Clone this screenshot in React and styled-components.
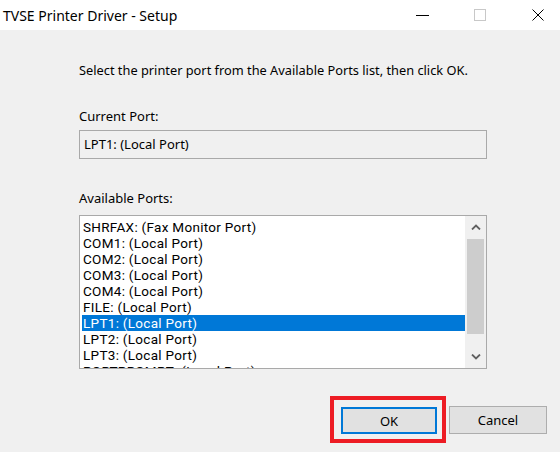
import React from 'react';
import styled, { createGlobalStyle } from 'styled-components';

const GlobalStyle = createGlobalStyle`
  html, body {
    margin: 0;
    padding: 0;
    background: #f0f0f0;
  }
  * { box-sizing: border-box; }
`

const Window = styled.div`
  width: 560px;
  height: 452px;
  background: #f0f0f0;
  font-family: 'Noto Sans', 'Open Sans', sans-serif;
  color: #000;
  overflow: hidden;
  display: flex;
  flex-direction: column;
`
const TitleBar = styled.div`
  height: 30px;
  background: #fff;
  display: flex;
  align-items: center;
  padding-left: 3px;
`
const Title = styled.div`
  flex: 1;
  font-size: 14px;
  margin-top: 1px;
`
const CaptionGroup = styled.div`
  display: flex;
  margin-right: -7px;
`
const CaptionButton = styled.div`
  width: 58px;
  height: 30px;
  display: flex;
  align-items: center;
  justify-content: center;
`
const Body = styled.div`
  flex: 1;
  display: flex;
  flex-direction: column;
  padding: 0 73px 0 79px;
`
const Intro = styled.p`
  margin: 31px 0 0 0;
  font-size: 12.8px;
  line-height: 18px;
`
const Label = styled.div`
  font-size: 13px;
  line-height: 18px;
  margin-top: ${p => p.$top}px;
`
const ReadOnlyField = styled.div`
  margin-top: 5px;
  height: 29px;
  border: 1px solid #a9a9a9;
  background: #f0f0f0;
  font-size: 13px;
  padding: 4px 0 0 4px;
`
const ListBox = styled.div`
  margin-top: 8px;
  height: 154px;
  border: 1px solid #a9a9a9;
  background: #fff;
  display: flex;
  overflow: hidden;
`
const Items = styled.div`
  flex: 1;
  padding: 3px 0 0 2px;
`
const Item = styled.div`
  height: 16px;
  line-height: 16px;
  font-family: Roboto, 'Noto Sans', sans-serif;
  font-size: 13.5px;
  letter-spacing: 0.3px;
  padding-left: 1px;
  white-space: nowrap;
  background: ${p => (p.$selected ? '#0078d7' : 'transparent')};
  color: ${p => (p.$selected ? '#fff' : '#000')};
`
const ScrollBar = styled.div`
  width: 21px;
  background: #f0f0f0;
  display: flex;
  flex-direction: column;
  align-items: center;
`
const ArrowBtn = styled.div`
  height: 22px;
  width: 100%;
  display: flex;
  align-items: center;
  justify-content: center;
`
const Track = styled.div`
  flex: 1;
  width: 100%;
  padding: 0 2px;
`
const Thumb = styled.div`
  margin-top: 1px;
  height: 95px;
  background: #cdcdcd;
`
const Footer = styled.div`
  display: flex;
  justify-content: flex-end;
  align-items: flex-end;
  gap: 3px;
  padding: 0 13px 9px 0;
  margin-top: auto;
`
const Highlight = styled.div`
  border: 4px solid #ed1c24;
  padding: 7px 5px 5px 7px;
`
const Button = styled.button`
  width: ${p => p.$w}px;
  height: ${p => (p.$focused ? 27 : 28)}px;
  margin-bottom: ${p => (p.$focused ? 0 : 9)}px;
  background: #e1e1e1;
  border: ${p => (p.$focused ? '2px solid #0078d7' : '1px solid #adadad')};
  font-family: 'Noto Sans', 'Open Sans', sans-serif;
  font-size: 13px;
  color: #000;
  padding: 0;
`

const ports = [
  'SHRFAX: (Fax Monitor Port)',
  'COM1: (Local Port)',
  'COM2: (Local Port)',
  'COM3: (Local Port)',
  'COM4: (Local Port)',
  'FILE: (Local Port)',
  'LPT1: (Local Port)',
  'LPT2: (Local Port)',
  'LPT3: (Local Port)',
  'PORTPROMPT: (Local Port)',
]

const Chevron = ({ up }) => (
  <svg width="10" height="6" viewBox="0 0 10 6">
    <path d={up ? 'M1 5.5 L5 1.5 L9 5.5' : 'M1 0.5 L5 4.5 L9 0.5'} fill="none" stroke="#606060" strokeWidth="1.8" />
  </svg>
)

const App = () => {
  return (
    <Window>
      <GlobalStyle />
      <TitleBar>
        <Title>TVSE Printer Driver - Setup</Title>
        <CaptionGroup>
          <CaptionButton>
            <svg width="13" height="12" viewBox="0 0 13 12"><path d="M0 6.5 H13" stroke="#000" strokeWidth="1" /></svg>
          </CaptionButton>
          <CaptionButton>
            <svg width="12" height="12" viewBox="0 0 12 12"><rect x="0.5" y="0.5" width="11" height="11" fill="none" stroke="#c8c8c8" /></svg>
          </CaptionButton>
          <CaptionButton>
            <svg width="12" height="12" viewBox="0 0 12 12"><path d="M0.5 0.5 L11.5 11.5 M11.5 0.5 L0.5 11.5" stroke="#000" strokeWidth="1" /></svg>
          </CaptionButton>
        </CaptionGroup>
      </TitleBar>
      <Body>
        <Intro>Select the printer port from the Available Ports list, then click OK.</Intro>
        <Label $top={28}>Current Port:</Label>
        <ReadOnlyField>LPT1: (Local Port)</ReadOnlyField>
        <Label $top={30}>Available Ports:</Label>
        <ListBox>
          <Items>
            {ports.map(p => (
              <Item key={p} $selected={p.startsWith('LPT1')}>{p}</Item>
            ))}
          </Items>
          <ScrollBar>
            <ArrowBtn><Chevron up /></ArrowBtn>
            <Track><Thumb /></Track>
            <ArrowBtn><Chevron /></ArrowBtn>
          </ScrollBar>
        </ListBox>
      </Body>
      <Footer>
        <Highlight>
          <Button $w={96} $focused>OK</Button>
        </Highlight>
        <Button $w={98}>Cancel</Button>
      </Footer>
    </Window>
  )
}

export default App;
